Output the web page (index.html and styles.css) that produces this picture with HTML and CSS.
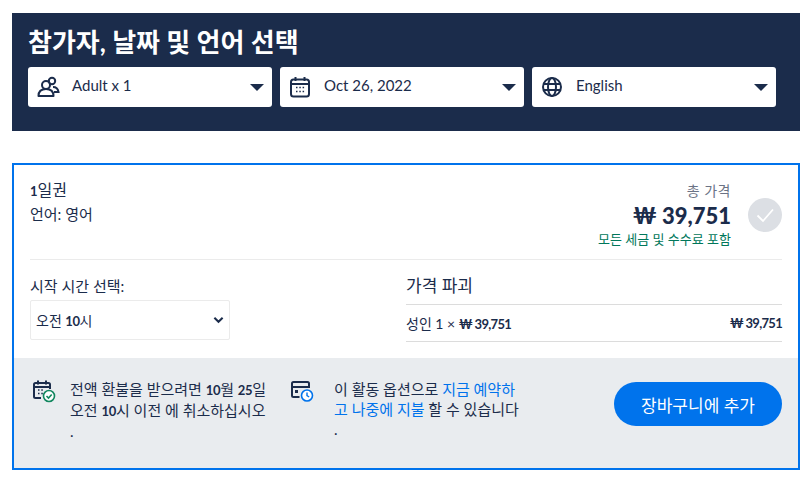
FILE: index.html
```html
<!DOCTYPE html>
<html lang="ko">
<head>
  <meta charset="UTF-8" />
  <title>Options</title>
  <link rel="stylesheet" href="styles.css">
</head>
<body>

  <!-- Filter bar -->
  <header class="filters">
    <h1>참가자, 날짜 및 언어 선택</h1>
    <div class="filter-row">
      <div class="filter">
        <svg class="filter-icon" viewBox="0 0 24 24" fill="none" stroke="#1b2c4b" stroke-width="2">
          <circle cx="10" cy="10" r="4"/>
          <circle cx="16" cy="6" r="3.2"/>
          <path d="M2.5 21c0-4 2.5-7 7.5-7s7.5 3 7.5 7z" stroke-linejoin="round"/>
          <path d="M17 12c3 0 5 2 5.5 5H18"/>
        </svg>
        <span class="filter-text">Adult x 1</span>
        <span class="caret"></span>
      </div>
      <div class="filter">
        <svg class="filter-icon" viewBox="0 0 24 24" fill="none" stroke="#1b2c4b" stroke-width="2">
          <rect x="3" y="4.500" width="18" height="17" rx="2.500"/>
          <path d="M3 9h18M7.500 2v4M16.500 2v4"/>
          <path d="M8 12.500h1.500M11.300 12.500h1.500M14.600 12.500h1.500M8 16.500h1.500M11.300 16.500h1.500M14.600 16.500h1.500" stroke-width="1.600"/>
        </svg>
        <span class="filter-text">Oct 26, 2022</span>
        <span class="caret"></span>
      </div>
      <div class="filter">
        <svg class="filter-icon" viewBox="0 0 24 24" fill="none" stroke="#1b2c4b" stroke-width="2">
          <circle cx="12" cy="12" r="9"/>
          <ellipse cx="12" cy="12" rx="4" ry="9"/>
          <path d="M3.500 9h17M3.500 15h17"/>
        </svg>
        <span class="filter-text">English</span>
        <span class="caret"></span>
      </div>
    </div>
  </header>

  <!-- Selected option card -->
  <section class="card">
    <div class="card-body">
      <div class="summary">
        <div class="summary-title">
          <div class="ticket-name"><b>1</b>일권</div>
          <div class="ticket-lang">언어: 영어</div>
        </div>
        <div class="summary-price">
          <div class="price-label">총 가격</div>
          <div class="price-total">₩ 39,751</div>
          <div class="price-note">모든 세금 및 수수료 포함</div>
        </div>
        <div class="check">
          <svg viewBox="0 0 34 34" width="34" height="34" fill="none" stroke="#fff" stroke-width="1.800">
            <path d="M9.500 17.500l5.500 5.500 10-11.500"/>
          </svg>
        </div>
      </div>

      <div class="details">
        <div class="time-col">
          <div class="time-label">시작 시간 선택:</div>
          <div class="time-select">
            <span>오전 <b>10</b>시</span>
            <svg viewBox="0 0 12 8" width="11" height="8" fill="none" stroke="#1b2c4b" stroke-width="2.200">
              <path d="M1.500 1.500l4.500 4.500 4.500-4.500"/>
            </svg>
          </div>
        </div>
        <div class="breakdown">
          <div class="breakdown-title">가격 파괴</div>
          <div class="breakdown-row">
            <span>성인 1 × <span class="amount">₩ 39,751</span></span>
            <span class="amount">₩ 39,751</span>
          </div>
        </div>
      </div>
    </div>

    <div class="card-foot">
      <div class="notice notice-refund">
        <svg class="notice-icon" viewBox="0 0 24 24" fill="none">
          <path d="M9 19H3.500A1.500 1.500 0 0 1 2 17.500V5.500A1.500 1.500 0 0 1 3.500 4h13A1.500 1.500 0 0 1 18 5.500V10M2 8h16M6 1.500V5.500M14 1.500V5.500" stroke="#1b2c4b" stroke-width="2"/>
          <path d="M6 11h1.500M9.300 11h1.500M6 14.500h1.500M9.300 14.500h1.500" stroke="#1b2c4b" stroke-width="1.500"/>
          <circle cx="17" cy="17" r="5.500" fill="#fff" stroke="#12875f" stroke-width="1.600"/>
          <path d="M14.500 17l2 2 3.200-3.500" stroke="#12875f" stroke-width="1.600"/>
        </svg>
        <p>전액 환불을 받으려면 <b>10</b>월 <b>25</b>일<br>오전 <b>10</b>시 이전 에 취소하십시오<br>.</p>
      </div>
      <div class="notice notice-later">
        <svg class="notice-icon" viewBox="0 0 24 24" fill="none">
          <path d="M9.500 18H3.500A1.500 1.500 0 0 1 2 16.500V4.500A1.500 1.500 0 0 1 3.500 3h14A1.500 1.500 0 0 1 19 4.500V9M2 8h17" stroke="#1b2c4b" stroke-width="2"/>
          <rect x="5" y="11" width="3" height="3" fill="#1b2c4b"/>
          <circle cx="17" cy="16.500" r="5.500" fill="#fff" stroke="#0073ec" stroke-width="1.600"/>
          <path d="M17 13.500v3.200l2.200 1.300" stroke="#0073ec" stroke-width="1.400"/>
        </svg>
        <p>이 활동 옵션으로 <a href="#">지금 예약하<br>고 나중에 지불</a> 할 수 있습니다<br>.</p>
      </div>
      <button class="add-btn">장바구니에 추가</button>
    </div>
  </section>

</body>
</html>
```

FILE: styles.css
```css
:root {
  --navy: #1b2c4b;
  --blue: #0073ec;
  --line: #ebebeb;
}

* {
  box-sizing: border-box;
}

body {
  margin: 0;
  padding: 13px 12px 0;
  background: #fff;
  color: var(--navy);
  font-family: Lato, "Noto Sans CJK KR", sans-serif;
  font-size: 14px;
}

/* Filter bar */
.filters {
  height: 118px;
  padding: 12px 24px 0 16px;
  background: var(--navy);
}

.filters h1 {
  margin: 0 0 8px;
  height: 34px;
  color: #fff;
  font-size: 26px;
  font-weight: 700;
  line-height: 34px;
}

.filter-row {
  display: flex;
  gap: 8px;
}

.filter {
  display: flex;
  align-items: center;
  flex: 1;
  height: 40px;
  padding: 0 8px;
  background: #fff;
  border-radius: 3px;
}

.filter-icon {
  width: 24px;
  height: 24px;
  margin-right: 12px;
}

.filter-text {
  flex: 1;
  padding-bottom: 4px;
  font-size: 15px;
}

.caret {
  width: 0;
  height: 0;
  margin-top: 1px;
  border-left: 7px solid transparent;
  border-right: 7px solid transparent;
  border-top: 7px solid var(--navy);
}

/* Card */
.card {
  height: 307px;
  margin-top: 32px;
  border: 2px solid var(--blue);
  display: flex;
  flex-direction: column;
}

.card-body {
  height: 193px;
  padding: 0 16px;
}

.summary {
  display: flex;
  height: 95px;
  padding-top: 14px;
  border-bottom: 1px solid var(--line);
}

.summary-title {
  flex: 1;
}

.ticket-name {
  font-size: 16px;
  line-height: 22px;
}

.ticket-name b {
  font-size: 13px;
}

.ticket-lang {
  margin-top: 1px;
  font-size: 15px;
  line-height: 22px;
}

.summary-price {
  text-align: right;
}

.price-label {
  margin-top: 3px;
  color: #6b7385;
  font-size: 14px;
  letter-spacing: .5px;
  line-height: 18px;
}

.price-total {
  margin-top: 1px;
  font-size: 22px;
  font-weight: 900;
  line-height: 30px;
}

.price-note {
  color: #00775a;
  font-size: 13px;
  line-height: 16px;
}

.check {
  width: 34px;
  height: 34px;
  margin: 19px 0 0 17px;
  border-radius: 50%;
  background: #dcdfe4;
}

.details {
  display: flex;
  padding-top: 14px;
}

.time-col {
  width: 376px;
}

.time-label {
  height: 26px;
  font-size: 15px;
  line-height: 24px;
}

.time-select {
  display: flex;
  align-items: center;
  justify-content: space-between;
  width: 200px;
  height: 40px;
  padding: 0 5px;
  border: 1px solid var(--line);
  border-radius: 2px;
  font-size: 14px;
}

.time-select b {
  font-size: 13px;
  letter-spacing: -.5px;
}

.breakdown {
  flex: 1;
}

.breakdown-title {
  height: 31px;
  border-bottom: 1px solid #dcdcdc;
  font-size: 17px;
  line-height: 24px;
}

.breakdown-row {
  display: flex;
  justify-content: space-between;
  align-items: center;
  height: 37px;
  border-bottom: 1px solid #dcdcdc;
  font-size: 14px;
}

.amount {
  font-size: 13px;
  font-weight: 700;
  letter-spacing: -.7px;
}

/* Grey footer of the card */
.card-foot {
  flex: 1;
  display: flex;
  padding: 21px 16px 0 18px;
  background: #e9ecef;
}

.notice {
  display: flex;
}

.notice-refund {
  width: 258px;
}

.notice-icon {
  width: 24px;
  height: 24px;
  flex: none;
  margin-right: 14px;
}

.notice-later .notice-icon {
  margin-right: 20px;
}

.notice p {
  margin: 0;
  font-size: 15px;
  line-height: 20px;
}

.notice b {
  font-size: 13px;
  letter-spacing: -.3px;
}

.notice a {
  color: var(--blue);
  text-decoration: none;
}

.add-btn {
  width: 168px;
  height: 44px;
  margin-left: auto;
  margin-top: 3px;
  border: none;
  border-radius: 22px;
  background: var(--blue);
  color: #fff;
  font-family: inherit;
  font-size: 17px;
}
```
